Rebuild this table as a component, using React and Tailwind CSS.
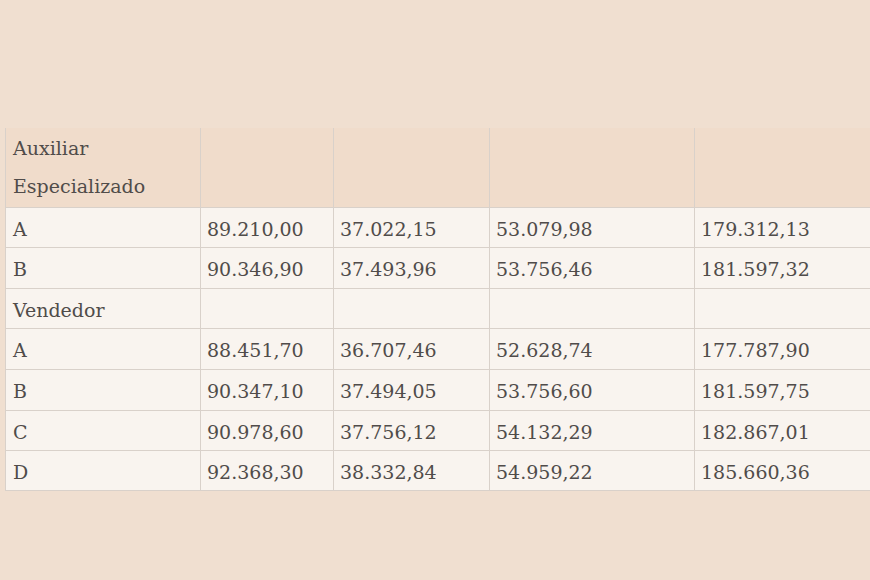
import React from "react";

const rows = [
  { h: 40, cells: ["A", "89.210,00", "37.022,15", "53.079,98", "179.312,13"] },
  { h: 41, cells: ["B", "90.346,90", "37.493,96", "53.756,46", "181.597,32"] },
  { h: 40, cells: ["Vendedor", "", "", "", ""] },
  { h: 41, cells: ["A", "88.451,70", "36.707,46", "52.628,74", "177.787,90"] },
  { h: 41, cells: ["B", "90.347,10", "37.494,05", "53.756,60", "181.597,75"] },
  { h: 40, cells: ["C", "90.978,60", "37.756,12", "54.132,29", "182.867,01"] },
  { h: 40, cells: ["D", "92.368,30", "38.332,84", "54.959,22", "185.660,36"] },
];

const rowHeights = {
  40: "h-[40px]",
  41: "h-[41px]",
};

const App = () => {
  return (
    <div className="w-[870px] h-[580px] overflow-hidden bg-[#f0dfd0] pt-[128px] pl-[5px] font-['DejaVu_Serif',serif] text-[#504c4a]">
      <table className="table-fixed border-collapse w-[885px] text-[19px]">
        <colgroup>
          <col className="w-[195px]" />
          <col className="w-[133px]" />
          <col className="w-[156px]" />
          <col className="w-[205px]" />
          <col className="w-[196px]" />
        </colgroup>
        <tbody>
          {/* category header */}
          <tr className="h-[79px] bg-[#f0dccb]">
            <td className="border-l border-b border-[#d9d1ca] pl-[7px] align-top pt-[1px] pb-0 leading-[38px]">
              Auxiliar
              <br />
              Especializado
            </td>
            <td className="border-l border-b border-[#d9d1ca]"></td>
            <td className="border-l border-b border-[#d9d1ca]"></td>
            <td className="border-l border-b border-[#d9d1ca]"></td>
            <td className="border-l border-b border-[#d9d1ca]"></td>
          </tr>

          {rows.map((row, i) => (
            <tr key={i} className={`${rowHeights[row.h]} bg-[#f9f4ef]`}>
              {row.cells.map((c, j) => (
                <td
                  key={j}
                  className={`border-l border-b border-[#d9d1ca] align-middle pt-[3px] leading-[24px] whitespace-nowrap ${
                    j === 0 ? "pl-[7px]" : "pl-[6px]"
                  }`}
                >
                  {c}
                </td>
              ))}
            </tr>
          ))}
        </tbody>
      </table>
    </div>
  );
};

export default App;
